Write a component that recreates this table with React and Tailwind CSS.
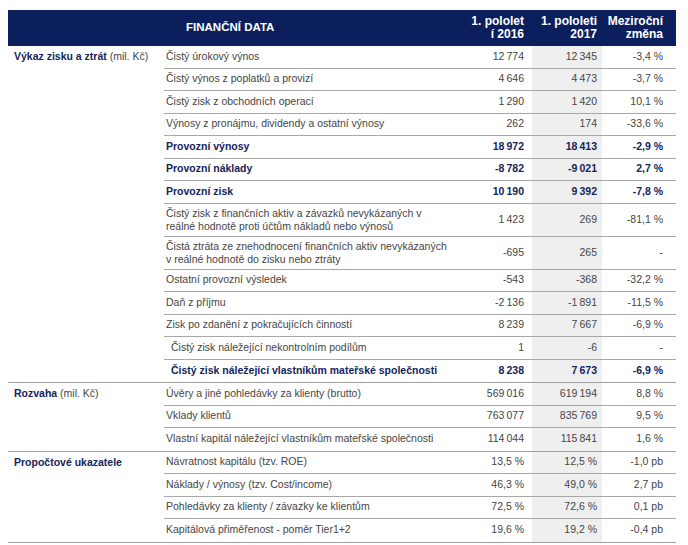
import React from 'react';

const sections = [
  {
    title: 'Výkaz zisku a ztrát',
    unit: ' (mil. Kč)',
    rows: [
      { label: 'Čistý úrokový výnos', a: '12 774', b: '12 345', c: '-3,4 %' },
      { label: 'Čistý výnos z poplatků a provizí', a: '4 646', b: '4 473', c: '-3,7 %' },
      { label: 'Čistý zisk z obchodních operací', a: '1 290', b: '1 420', c: '10,1 %' },
      { label: 'Výnosy z pronájmu, dividendy a ostatní výnosy', a: '262', b: '174', c: '-33,6 %' },
      { label: 'Provozní výnosy', a: '18 972', b: '18 413', c: '-2,9 %', bold: true },
      { label: 'Provozní náklady', a: '-8 782', b: '-9 021', c: '2,7 %', bold: true },
      { label: 'Provozní zisk', a: '10 190', b: '9 392', c: '-7,8 %', bold: true },
      {
        label: ['Čistý zisk z finančních aktiv a závazků nevykázaných v', 'reálné hodnotě proti účtům nákladů nebo výnosů'],
        a: '1 423', b: '269', c: '-81,1 %',
      },
      {
        label: ['Čistá ztráta ze znehodnocení finančních aktiv nevykázaných', 'v reálné hodnotě do zisku nebo ztráty'],
        a: '-695', b: '265', c: '-',
      },
      { label: 'Ostatní provozní výsledek', a: '-543', b: '-368', c: '-32,2 %' },
      { label: 'Daň z příjmu', a: '-2 136', b: '-1 891', c: '-11,5 %' },
      { label: 'Zisk po zdanění z pokračujících činností', a: '8 239', b: '7 667', c: '-6,9 %' },
      { label: 'Čistý zisk náležející nekontrolním podílům', a: '1', b: '-6', c: '-', indent: true },
      { label: 'Čistý zisk náležející vlastníkům mateřské společnosti', a: '8 238', b: '7 673', c: '-6,9 %', bold: true, indent: true },
    ],
  },
  {
    title: 'Rozvaha',
    unit: ' (mil. Kč)',
    rows: [
      { label: 'Úvěry a jiné pohledávky za klienty (brutto)', a: '569 016', b: '619 194', c: '8,8 %' },
      { label: 'Vklady klientů', a: '763 077', b: '835 769', c: '9,5 %' },
      { label: 'Vlastní kapitál náležející vlastníkům mateřské společnosti', a: '114 044', b: '115 841', c: '1,6 %' },
    ],
  },
  {
    title: 'Propočtové ukazatele',
    unit: '',
    rows: [
      { label: 'Návratnost kapitálu (tzv. ROE)', a: '13,5 %', b: '12,5 %', c: '-1,0 pb' },
      { label: 'Náklady / výnosy (tzv. Cost/income)', a: '46,3 %', b: '49,0 %', c: '2,7 pb' },
      { label: 'Pohledávky za klienty / závazky ke klientům', a: '72,5 %', b: '72,6 %', c: '0,1 pb' },
      { label: 'Kapitálová přiměřenost - poměr Tier1+2', a: '19,6 %', b: '19,2 %', c: '-0,4 pb' },
    ],
  },
];

// numbers use a narrow gap between thousands
const num = (s) => s.replace(/(\d) (\d)/g, '$1\u2009$2');

function Row({ row, last }) {
  const twoLine = Array.isArray(row.label);
  const tone = row.bold ? 'font-bold text-[#15245a]' : 'text-[#454545]';
  return (
    <div
      className={`grid grid-cols-[306px_62px_70px_74px] ${twoLine ? 'h-[33px]' : 'h-[22.5px]'} ${
        last ? '' : 'border-b border-[#a8a8a8]'
      } ${tone}`}
    >
      <div className={`flex items-center ${row.indent ? 'pl-[7px]' : 'pl-[2px]'}`}>
        {twoLine ? (
          <span className="leading-[13px]">
            {row.label[0]}
            <br />
            {row.label[1]}
          </span>
        ) : (
          row.label
        )}
      </div>
      <div className="flex items-center justify-end pr-[8px]">{num(row.a)}</div>
      <div className="flex items-center justify-end pr-[5px] bg-[#efefef]">{num(row.b)}</div>
      <div className="flex items-center justify-end pr-[13px]">{num(row.c)}</div>
    </div>
  );
}

export default function App() {
  return (
    <div className="w-[688px] h-[545px] bg-white pt-[10px] pl-[8px] font-['Liberation_Sans',Arial,sans-serif] text-[10.5px]">
      <div className="w-[668px]">
        {/* Header */}
        <div className="grid grid-cols-[156px_306px_62px_70px_74px] h-[36px] bg-[#0b1f5c] text-white font-bold">
          <div />
          <div className="flex items-center pl-[22px] text-[11.5px]">FINANČNÍ DATA</div>
          <div className="flex items-center justify-end pr-[8px]">
            <span className="text-right text-[12px] leading-[13px]">
              1. pololet
              <br />
              í 2016
            </span>
          </div>
          <div className="flex items-center justify-end pr-[5px]">
            <span className="text-right text-[12px] leading-[13px]">
              1. pololeti
              <br />
              2017
            </span>
          </div>
          <div className="flex items-center justify-end pr-[13px]">
            <span className="text-right text-[12px] leading-[13px]">
              Meziroční
              <br />
              změna
            </span>
          </div>
        </div>

        {sections.map((sec) => (
          <div key={sec.title} className="flex border-b border-[#a0a0a0]">
            <div className="w-[156px] shrink-0">
              <div className="h-[22.5px] flex items-center pl-[6px] text-[#454545]">
                <span className="font-bold text-[#15245a]">{sec.title}</span>
                {sec.unit && <span className="whitespace-pre">{sec.unit}</span>}
              </div>
            </div>
            <div className="flex-1">
              {sec.rows.map((r, i) => (
                <Row key={i} row={r} last={i === sec.rows.length - 1} />
              ))}
            </div>
          </div>
        ))}
      </div>
    </div>
  );
}
